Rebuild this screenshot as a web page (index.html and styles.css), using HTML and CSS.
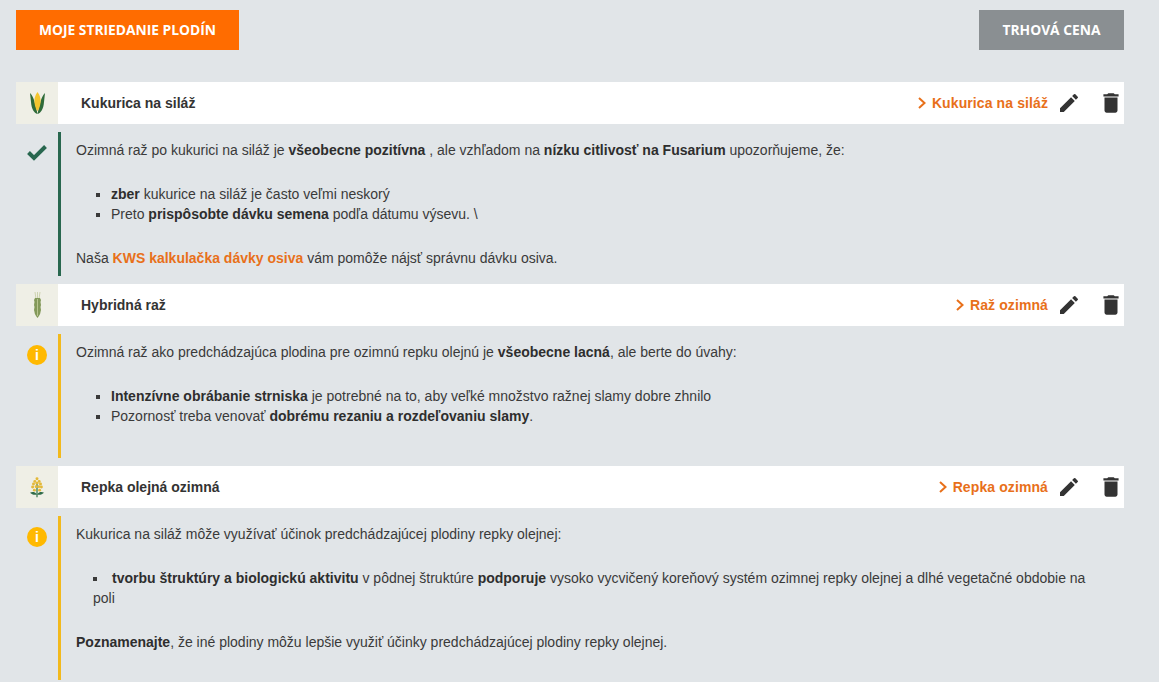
FILE: index.html
```html
<!DOCTYPE html>
<html lang="sk">
<head>
  <meta charset="UTF-8" />
  <title>Moje striedanie plodín</title>
  <link rel="stylesheet" href="styles.css">
</head>
<body>

  <div class="top-buttons">
    <a class="btn btn-orange">MOJE STRIEDANIE PLODÍN</a>
    <a class="btn btn-grey">TRHOVÁ CENA</a>
  </div>

  <!-- Kukurica -->
  <div class="crop-row">
    <div class="crop-icon">
      <svg width="15" height="22" viewBox="0 0 15 22">
        <path d="M7.500 22C4 21 1.500 17 1 10L0 1C2 3 3 5 4 8L6 15Z" fill="#2f6b3a"/>
        <path d="M7.500 22C11 21 13.500 17 14 10L15 1C13 3 12 5 11 8L9 15Z" fill="#2f6b3a"/>
        <path d="M7.500 0C10 3 11 7 10.500 11C10 15 8.500 18 7.500 19C6.500 18 5 15 4.500 11C4 7 5 3 7.500 0Z" fill="#f3c52e"/>
      </svg>
    </div>
    <div class="crop-name">Kukurica na siláž</div>
    <a class="crop-link"><svg class="chevron" width="10" height="12" viewBox="0 0 10 12"><path d="M2 1L7.500 6L2 11" fill="none" stroke="#e8701a" stroke-width="2"/></svg>Kukurica na siláž</a>
    <svg class="action edit" width="24" height="24" viewBox="0 0 24 24"><path d="M3 17.250V21h3.750L17.810 9.940l-3.750-3.750L3 17.250zM20.710 7.040a1 1 0 0 0 0-1.410l-2.340-2.340a1 1 0 0 0-1.410 0l-1.830 1.830 3.750 3.750 1.830-1.830z" fill="#333"/></svg>
    <svg class="action trash" width="26" height="26" viewBox="0 0 24 24"><path d="M6 19c0 1.100.9 2 2 2h8c1.100 0 2-.9 2-2V7H6v12zM19 4h-3.500l-1-1h-5l-1 1H5v2h14V4z" fill="#333"/></svg>
  </div>
  <div class="note note-ok">
    <div class="note-icon">
      <svg width="22" height="18" viewBox="0 0 22 18"><path d="M2.500 9.500L8 15L19.500 3.500" fill="none" stroke="#28674f" stroke-width="4"/></svg>
    </div>
    <div class="note-body">
      <p>Ozimná raž po kukurici na siláž je <b>všeobecne pozitívna</b> , ale vzhľadom na <b>nízku citlivosť na Fusarium</b> upozorňujeme, že:</p>
      <ul>
        <li><b>zber</b> kukurice na siláž je často veľmi neskorý</li>
        <li>Preto <b>prispôsobte dávku semena</b> podľa dátumu výsevu. \</li>
      </ul>
      <p>Naša <b class="orange">KWS kalkulačka dávky osiva</b> vám pomôže nájsť správnu dávku osiva.</p>
    </div>
  </div>

  <!-- Raz -->
  <div class="crop-row">
    <div class="crop-icon">
      <svg width="9" height="26" viewBox="0 0 9 26">
        <path d="M2 0L3 7M7 0L6 7M4.500 0V7" stroke="#cdd3b0" stroke-width="1" fill="none"/>
        <path d="M4.500 26C3 24 1.500 22 1.500 20L1 18L1.500 15L1 13L1.500 10L1 8L2 6H7L8 8L7.500 10L8 13L7.500 15L8 18L7.500 20C7.500 22 6 24 4.500 26Z" fill="#83995a"/>
        <path d="M4.500 7V24" stroke="#b7c48e" stroke-width="1"/>
      </svg>
    </div>
    <div class="crop-name">Hybridná raž</div>
    <a class="crop-link"><svg class="chevron" width="10" height="12" viewBox="0 0 10 12"><path d="M2 1L7.500 6L2 11" fill="none" stroke="#e8701a" stroke-width="2"/></svg>Raž ozimná</a>
    <svg class="action edit" width="24" height="24" viewBox="0 0 24 24"><path d="M3 17.250V21h3.750L17.810 9.940l-3.750-3.750L3 17.250zM20.710 7.040a1 1 0 0 0 0-1.410l-2.340-2.340a1 1 0 0 0-1.410 0l-1.830 1.830 3.750 3.750 1.830-1.830z" fill="#333"/></svg>
    <svg class="action trash" width="26" height="26" viewBox="0 0 24 24"><path d="M6 19c0 1.100.9 2 2 2h8c1.100 0 2-.9 2-2V7H6v12zM19 4h-3.500l-1-1h-5l-1 1H5v2h14V4z" fill="#333"/></svg>
  </div>
  <div class="note note-info note-raz">
    <div class="note-icon"><span class="info-dot">i</span></div>
    <div class="note-body">
      <p>Ozimná raž ako predchádzajúca plodina pre ozimnú repku olejnú je <b>všeobecne lacná</b>, ale berte do úvahy:</p>
      <ul>
        <li><b>Intenzívne obrábanie strniska</b> je potrebné na to, aby veľké množstvo ražnej slamy dobre zhnilo</li>
        <li>Pozornosť treba venovať <b>dobrému rezaniu a rozdeľovaniu slamy</b>.</li>
      </ul>
    </div>
  </div>

  <!-- Repka -->
  <div class="crop-row">
    <div class="crop-icon">
      <svg width="16" height="21" viewBox="0 0 18 24">
        <path d="M9 8V23" stroke="#3f7d55" stroke-width="1.500"/>
        <path d="M9 20C6 16 3 17 1 18C3 20 6 21 9 20ZM9 20C12 16 15 17 17 18C15 20 12 21 9 20Z" fill="#2f6b4a"/>
        <g fill="#e3b93a">
          <circle cx="9" cy="2" r="1.700"/><circle cx="6.500" cy="5" r="1.700"/><circle cx="11.500" cy="5" r="1.700"/>
          <circle cx="5" cy="8" r="1.700"/><circle cx="9" cy="7" r="1.700"/><circle cx="13" cy="8" r="1.700"/>
          <circle cx="4" cy="11.500" r="1.700"/><circle cx="8" cy="11" r="1.700"/><circle cx="11" cy="11" r="1.700"/><circle cx="14" cy="11.500" r="1.700"/>
          <circle cx="6" cy="15" r="1.700"/><circle cx="12" cy="15" r="1.700"/>
        </g>
      </svg>
    </div>
    <div class="crop-name">Repka olejná ozimná</div>
    <a class="crop-link"><svg class="chevron" width="10" height="12" viewBox="0 0 10 12"><path d="M2 1L7.500 6L2 11" fill="none" stroke="#e8701a" stroke-width="2"/></svg>Repka ozimná</a>
    <svg class="action edit" width="24" height="24" viewBox="0 0 24 24"><path d="M3 17.250V21h3.750L17.810 9.940l-3.750-3.750L3 17.250zM20.710 7.040a1 1 0 0 0 0-1.410l-2.340-2.340a1 1 0 0 0-1.410 0l-1.830 1.830 3.750 3.750 1.830-1.830z" fill="#333"/></svg>
    <svg class="action trash" width="26" height="26" viewBox="0 0 24 24"><path d="M6 19c0 1.100.9 2 2 2h8c1.100 0 2-.9 2-2V7H6v12zM19 4h-3.500l-1-1h-5l-1 1H5v2h14V4z" fill="#333"/></svg>
  </div>
  <div class="note note-info note-last">
    <div class="note-icon"><span class="info-dot">i</span></div>
    <div class="note-body">
      <p>Kukurica na siláž môže využívať účinok predchádzajúcej plodiny repky olejnej:</p>
      <ul class="tight">
        <li><b>tvorbu štruktúry a biologickú aktivitu</b> v pôdnej štruktúre <b>podporuje</b> vysoko vycvičený koreňový systém ozimnej repky olejnej a dlhé vegetačné obdobie na poli</li>
      </ul>
      <p><b>Poznamenajte</b>, že iné plodiny môžu lepšie využiť účinky predchádzajúcej plodiny repky olejnej.</p>
    </div>
  </div>

</body>
</html>
```

FILE: styles.css
```css
html, body {
  height: 682px;
  overflow: hidden;
}

body {
  margin: 0;
  padding: 10px 35px 0 16px;
  box-sizing: border-box;
  background: #e1e5e8;
  font-family: "Liberation Sans", Arial, sans-serif;
  font-size: 14px;
  line-height: 20px;
  color: #3a3a3a;
}

b {
  color: #2e2e2e;
}

.top-buttons {
  display: flex;
  justify-content: space-between;
  margin-bottom: 32px;
}

.btn {
  height: 40px;
  display: flex;
  align-items: center;
  justify-content: center;
  color: #fff;
  font-family: "Open Sans", sans-serif;
  font-size: 13.800px;
  font-weight: 700;
}

.btn-orange {
  width: 223px;
  background: #ff6c00;
}

.btn-grey {
  width: 145px;
  background: #8a8f92;
}

.crop-row {
  height: 42px;
  display: flex;
  align-items: center;
  background: #fff;
  margin-bottom: 8px;
}

.crop-icon {
  width: 42px;
  height: 42px;
  display: flex;
  align-items: center;
  justify-content: center;
  background: #efefe6;
}

.crop-name {
  margin-left: 23px;
  font-weight: 700;
  color: #333;
  flex: 1;
}

.crop-link {
  display: flex;
  align-items: center;
  font-weight: 700;
  letter-spacing: 0.1px;
  color: #e8701a;
}

.chevron {
  margin-right: 5px;
}

.action {
  flex: none;
}

.edit {
  margin-left: 9px;
}

.trash {
  margin-left: 17px;
}

.note {
  display: flex;
  margin-bottom: 8px;
}

.note-icon {
  width: 42px;
  padding-top: 11px;
  display: flex;
  justify-content: center;
  align-items: flex-start;
}

.note-body {
  flex: 1;
  padding: 8px 30px 8px 15px;
  border-left: 3px solid #28674f;
}

.note-info .note-body {
  border-left-color: #f2b91c;
}

.note-raz .note-body {
  height: 124px;
  box-sizing: border-box;
}

.note-last .note-body {
  padding-bottom: 28px;
}

.note-body p {
  margin: 0;
}

.note-body ul {
  margin: 24px 0;
  padding-left: 35px;
  list-style: square;
}

.note-body ul.tight {
  padding-left: 17px;
  list-style-position: inside;
}

.orange {
  color: #e8701a;
}

.info-dot {
  width: 20px;
  height: 20px;
  border-radius: 50%;
  background: #ffb900;
  color: #fff;
  font-weight: 700;
  font-size: 14px;
  text-align: center;
}
```
